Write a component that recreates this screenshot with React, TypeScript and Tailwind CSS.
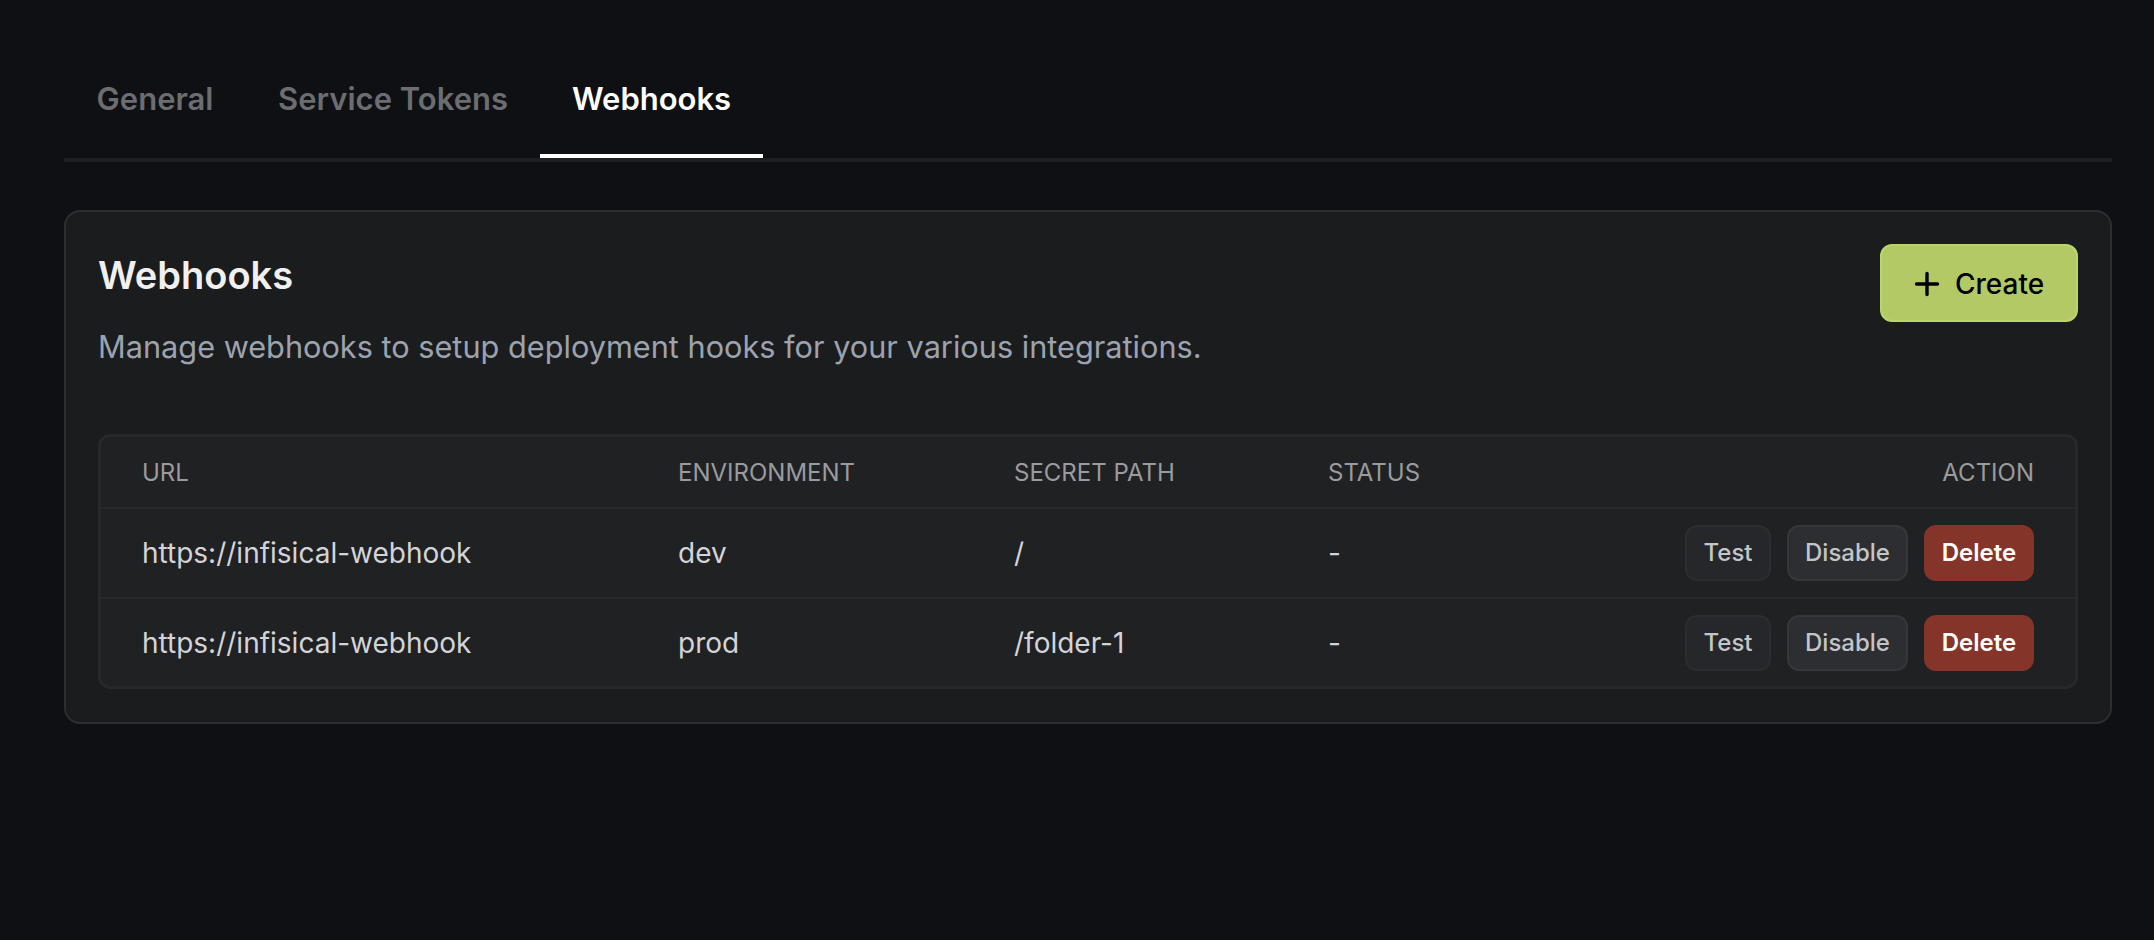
import { Plus } from 'lucide-react';

const rows = [
  { url: 'https://infisical-webhook', env: 'dev', path: '/' },
  { url: 'https://infisical-webhook', env: 'prod', path: '/folder-1' },
];

const tabClass = 'h-[118px] border-b-4 px-8 pt-[5px] text-[31px] font-semibold';

export default function App() {
  return (
    <div className="min-h-[940px] bg-[#0e1014] pt-10 pr-[42px] pl-16 font-['Inter',sans-serif]">
      <div className="flex border-b-4 border-[#1c1e21]">
        <button className={`${tabClass} w-[182px] border-transparent text-[#6b6d70]`}>General</button>
        <button className={`${tabClass} border-transparent text-[#6b6d70]`}>Service Tokens</button>
        <button className={`${tabClass} border-white text-white`}>Webhooks</button>
      </div>

      <div className="mt-12 rounded-2xl border-2 border-[#2d2e32] bg-[#1b1c1e] px-8 pt-8 pb-[33px]">
        <div className="flex h-[190px] items-start justify-between">
          <div>
            <h2 className="mt-1 text-[38px] leading-[54px] font-semibold text-[#f0f0f1]">Webhooks</h2>
            <p className="mt-[23px] text-[30.7px] leading-[44px] text-[#9ca3af]">
              Manage webhooks to setup deployment hooks for your various integrations.
            </p>
          </div>
          <button className="flex h-[78px] w-[198px] items-center gap-[10px] rounded-xl border-2 border-[#bcd46c] bg-[#b2c965] pt-px pl-[27px] text-[28px] font-medium text-black">
            <Plus className="size-9" strokeWidth={2.25} />
            Create
          </button>
        </div>

        <div className="overflow-hidden rounded-xl border-[3px] border-[#26282b] bg-[#1f2123]">
          <table className="w-full table-fixed text-left">
            <thead>
              <tr className="h-[71px] border-b-2 border-[#26282b] text-[24px] uppercase text-[#9a9b9e]">
                <th className="w-[577px] pt-px pl-[41px] font-normal">URL</th>
                <th className="w-[336px] pt-px font-normal">Environment</th>
                <th className="w-[314px] pt-px font-normal">Secret Path</th>
                <th className="w-[200px] pt-px font-normal">Status</th>
                <th className="pt-px pr-[41px] text-right font-normal">Action</th>
              </tr>
            </thead>
            <tbody>
              {rows.map((row, i) => (
                <tr key={row.env} className={`text-[28px] text-[#d4d4d8] ${i === 0 ? 'h-[90px] border-b-2 border-[#26282b]' : 'h-[88px]'}`}>
                  <td className="pl-[41px]">{row.url}</td>
                  <td>{row.env}</td>
                  <td>{row.path}</td>
                  <td>-</td>
                  <td className="pr-[41px]">
                    <div className="flex justify-end gap-4">
                      <button className="h-14 w-[86px] rounded-xl border-2 border-[#2b2d30] bg-[#25272a] text-[24px] font-medium text-[#c4c5c8]">Test</button>
                      <button className="h-14 w-[121px] rounded-xl border-2 border-[#35373a] bg-[#2d2e32] text-[24px] font-medium text-[#c4c5c8]">Disable</button>
                      <button className="h-14 w-[110px] rounded-xl bg-[#843429] text-[24px] font-semibold text-white">Delete</button>
                    </div>
                  </td>
                </tr>
              ))}
            </tbody>
          </table>
        </div>
      </div>
    </div>
  );
}
